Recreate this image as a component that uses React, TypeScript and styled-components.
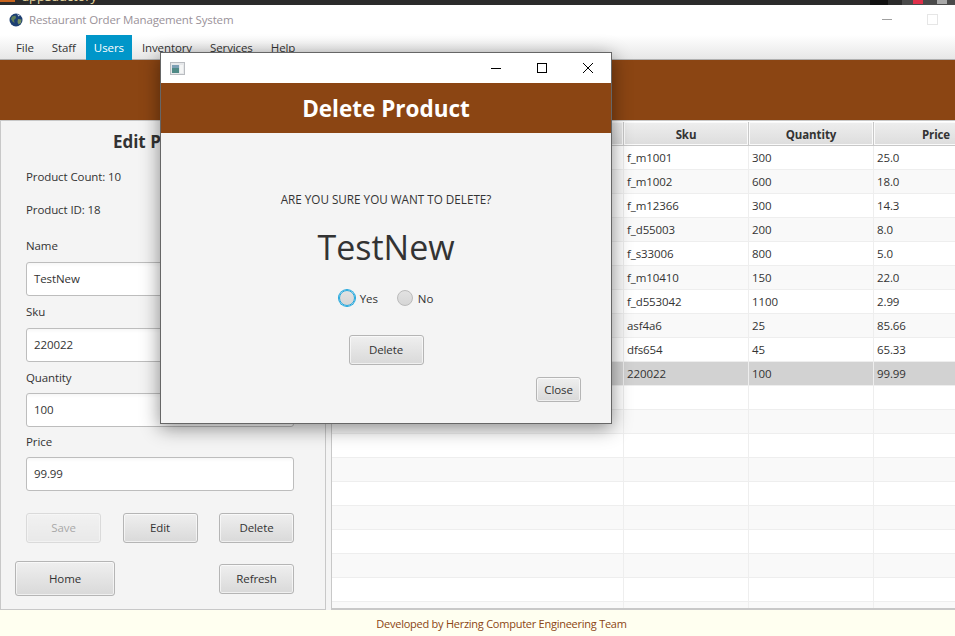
import React from 'react';
import styled, { createGlobalStyle } from 'styled-components';

const GlobalStyle = createGlobalStyle`
    html, body {
        margin: 0;
        padding: 0;
        overflow: hidden;
    }
    body {
        font-family: 'Open Sans', 'Noto Sans', sans-serif;
        font-size: 11.5px;
        letter-spacing: -0.1px;
        color: #333;
    }
`;

const MENU = ['File', 'Staff', 'Users', 'Inventory', 'Services', 'Help'];

const PRODUCTS = [
    ['f_m1001', '300', '25.0'],
    ['f_m1002', '600', '18.0'],
    ['f_m12366', '300', '14.3'],
    ['f_d55003', '200', '8.0'],
    ['f_s33006', '800', '5.0'],
    ['f_m10410', '150', '22.0'],
    ['f_d553042', '1100', '2.99'],
    ['asf4a6', '25', '85.66'],
    ['dfs654', '45', '65.33'],
    ['220022', '100', '99.99'],
];

const SELECTED_ROW = 9;
const ROW_COUNT = 20;

const Globe = () => (
    <svg width="14" height="14" viewBox="0 0 14 14">
        <circle cx="7" cy="7" r="6.5" fill="#1d3f73" />
        <path d="M3 3.5 L6.5 2.5 L7 5 L5 7 L5.5 10 L3.5 8.5 L2 6 Z" fill="#5f7f58" />
        <path d="M9 6 L12.5 6.5 L12 10 L9.5 11.5 L8.5 9 Z" fill="#77905f" />
        <path d="M8 1 L11 2.5 L9.5 3.5 Z" fill="#c9d6e4" />
    </svg>
);

const AppIcon = () => (
    <svg width="15" height="13" viewBox="0 0 15 13">
        <rect x="0.5" y="0.5" width="14" height="12" fill="#e6e8ea" stroke="#b9bcc0" />
        <rect x="2" y="3" width="7" height="8" fill="#4f8a86" />
        <rect x="2" y="3" width="7" height="3" fill="#7da0b5" />
        <rect x="10" y="3" width="3" height="8" fill="#f4f5f5" />
    </svg>
);

export default function App() {
    return (
        <Page>
            <GlobalStyle />
            <TopStrip>
                <StripAccent />
                <StripText>appSauctory</StripText>
                <StripBlock />
                <StripTray>
                    <TrayMark color="#e0304a" />
                    <TrayMark color="#a8a8a8" />
                </StripTray>
            </TopStrip>
            <TitleBar>
                <Globe />
                <WindowTitle>Restaurant Order Management System</WindowTitle>
                <WindowButtons>
                    <FadedMinimize />
                    <FadedMaximize />
                </WindowButtons>
            </TitleBar>
            <MenuBar>
                {MENU.map(item => (
                    <MenuItem key={item} $active={item === 'Users'}>
                        {item}
                    </MenuItem>
                ))}
            </MenuBar>
            <Banner />
            <Content>
                <FormPanel>
                    <PanelTitle>Edit Product</PanelTitle>
                    <InfoLine>Product Count: 10</InfoLine>
                    <InfoLine>Product ID: 18</InfoLine>
                    <Fields>
                        <FieldLabel>Name</FieldLabel>
                        <TextBox>TestNew</TextBox>
                        <FieldLabel>Sku</FieldLabel>
                        <TextBox>220022</TextBox>
                        <FieldLabel $gap={7}>Quantity</FieldLabel>
                        <TextBox $gap={7}>100</TextBox>
                        <FieldLabel $gap={7}>Price</FieldLabel>
                        <TextBox>99.99</TextBox>
                    </Fields>
                    <ActionRow>
                        <Button $disabled>Save</Button>
                        <Button>Edit</Button>
                        <Button>Delete</Button>
                    </ActionRow>
                    <BottomRow>
                        <HomeButton>Home</HomeButton>
                        <Button>Refresh</Button>
                    </BottomRow>
                </FormPanel>
                <TablePanel>
                    <HeaderRow>
                        <HeaderCell>Name</HeaderCell>
                        <HeaderCell>Sku</HeaderCell>
                        <HeaderCell>Quantity</HeaderCell>
                        <HeaderCell>Price</HeaderCell>
                    </HeaderRow>
                    {Array.from({ length: ROW_COUNT }, (_, i) => (
                        <Row key={i} $odd={i % 2 === 1} $selected={i === SELECTED_ROW}>
                            <Cell />
                            <Cell>{PRODUCTS[i]?.[0]}</Cell>
                            <Cell>{PRODUCTS[i]?.[1]}</Cell>
                            <Cell>{PRODUCTS[i]?.[2]}</Cell>
                        </Row>
                    ))}
                </TablePanel>
            </Content>
            <Footer>Developed by Herzing Computer Engineering Team</Footer>

            <Dialog>
                <DialogTitleBar>
                    <AppIcon />
                    <DialogControls>
                        <svg width="10" height="10" viewBox="0 0 10 10">
                            <path d="M0 5.5H10" stroke="#000" />
                        </svg>
                        <svg width="10" height="10" viewBox="0 0 10 10">
                            <rect x="0.5" y="0.5" width="9" height="9" fill="none" stroke="#000" />
                        </svg>
                        <svg width="10" height="10" viewBox="0 0 10 10">
                            <path d="M0 0L10 10M10 0L0 10" stroke="#000" />
                        </svg>
                    </DialogControls>
                </DialogTitleBar>
                <DialogBanner>Delete Product</DialogBanner>
                <DialogBody>
                    <Question>ARE YOU SURE YOU WANT TO DELETE?</Question>
                    <ProductName>TestNew</ProductName>
                    <RadioRow>
                        <RadioOption>
                            <Radio $focused />
                            Yes
                        </RadioOption>
                        <RadioOption>
                            <Radio />
                            No
                        </RadioOption>
                    </RadioRow>
                    <Button>Delete</Button>
                    <CloseRow>
                        <CloseButton>Close</CloseButton>
                    </CloseRow>
                </DialogBody>
            </Dialog>
        </Page>
    );
}

const Page = styled.div`
    position: relative;
    width: 955px;
    height: 636px;
    display: flex;
    flex-direction: column;
    background: #fff;
    overflow: hidden;
`;

const TopStrip = styled.div`
    height: 5px;
    flex: none;
    display: flex;
    background: #2b2b2b;
    overflow: hidden;
`;

const StripAccent = styled.div`
    width: 15px;
    height: 2px;
    background: #c8641e;
`;

const StripText = styled.div`
    margin: -11px 0 0 7px;
    color: #e8d9a0;
    font-size: 13px;
    line-height: 14px;
`;

const StripBlock = styled.div`
    width: 18px;
    height: 5px;
    margin-left: auto;
    margin-right: 14px;
    background: #111;
`;

const StripTray = styled.div`
    width: 53px;
    box-sizing: border-box;
    display: flex;
    gap: 14px;
    padding-left: 11px;
    background: #4a4a4a;
`;

const TrayMark = styled.div<{ color: string }>`
    width: 10px;
    height: 4px;
    background: ${({ color }) => color};
`;

const TitleBar = styled.div`
    height: 30px;
    flex: none;
    box-sizing: border-box;
    display: flex;
    align-items: center;
    padding: 0 0 1px 9px;
    background: #fff;
`;

const WindowTitle = styled.div`
    margin-left: 6px;
    color: #9a9299;
    letter-spacing: -0.15px;
`;

const WindowButtons = styled.div`
    margin-left: auto;
    display: flex;
    align-items: center;
    gap: 35px;
    padding-right: 17px;
`;

const FadedMinimize = styled.div`
    width: 10px;
    height: 1px;
    background: #a0a0a0;
`;

const FadedMaximize = styled.div`
    width: 9px;
    height: 9px;
    border: 1px solid #e6e6e6;
`;

const MenuBar = styled.div`
    height: 25px;
    flex: none;
    display: flex;
    gap: 2px;
    padding-left: 8px;
    background: linear-gradient(#ffffff, #e6e6e6);
    box-shadow: inset 0 -1px 0 #b0b0b0;
`;

const MenuItem = styled.div<{ $active?: boolean }>`
    display: flex;
    align-items: center;
    padding: 0 8px;
    color: ${({ $active }) => ($active ? '#fff' : '#333')};
    background: ${({ $active }) => ($active ? '#0096c9' : 'transparent')};
`;

const Banner = styled.div`
    height: 60px;
    flex: none;
    background: #8b4513;
`;

const Content = styled.div`
    flex: 1;
    min-height: 0;
    display: flex;
    gap: 5px;
    background: #f4f4f4;
`;

const FormPanel = styled.div`
    width: 326px;
    flex: none;
    box-sizing: border-box;
    padding: 0 31px 0 25px;
    border: 1px solid #c8c8c8;
    background: #f4f4f4;
    overflow: hidden;
`;

const PanelTitle = styled.div`
    margin: 9px 0 0 10px;
    text-align: center;
    font-size: 17px;
    font-weight: 700;
    letter-spacing: 0;
    line-height: 23px;
`;

const InfoLine = styled.div`
    margin-top: 15px;
    line-height: 18px;
`;

const Fields = styled.div`
    margin-top: 19px;
    display: flex;
    flex-direction: column;
`;

const FieldLabel = styled.div<{ $gap?: number }>`
    height: 16px;
    line-height: 16px;
    margin-bottom: ${({ $gap = 8 }) => $gap}px;
`;

const TextBox = styled.div<{ $gap?: number }>`
    width: 268px;
    height: 34px;
    box-sizing: border-box;
    display: flex;
    align-items: center;
    padding: 0 7px 2px;
    margin-bottom: ${({ $gap = 8 }) => $gap}px;
    border: 1px solid #bdbdbd;
    border-radius: 3px;
    background: linear-gradient(#f7f7f7, #fff 4px);
    color: #333;
`;

const ActionRow = styled.div`
    display: flex;
    justify-content: space-between;
    width: 268px;
    margin-top: 14px;
`;

const Button = styled.div<{ $disabled?: boolean }>`
    width: 75px;
    height: 30px;
    box-sizing: border-box;
    display: flex;
    align-items: center;
    justify-content: center;
    padding-bottom: 1px;
    border: 1px solid #b5b5b5;
    border-radius: 3px;
    background: linear-gradient(#efefef, #d9d9d9);
    box-shadow: inset 0 0 0 1px rgba(255, 255, 255, 0.6);
    opacity: ${({ $disabled }) => ($disabled ? 0.4 : 1)};
`;

const BottomRow = styled.div`
    display: flex;
    align-items: center;
    justify-content: space-between;
    width: 279px;
    margin: 18px 0 0 -11px;
`;

const HomeButton = styled(Button)`
    width: 100px;
    height: 35px;
`;

const TablePanel = styled.div`
    flex: 1;
    min-width: 0;
    border: 1px solid #c8c8c8;
    border-width: 1px 0 2px 1px;
    padding-top: 1px;
    background: #fff;
    overflow: hidden;
`;

const COLUMNS = '292px 125px 125px 125px';

const HeaderRow = styled.div`
    display: grid;
    grid-template-columns: ${COLUMNS};
    height: 24px;
    box-sizing: border-box;
    border-bottom: 1px solid #c8c8c8;
`;

const HeaderCell = styled.div`
    display: flex;
    align-items: center;
    justify-content: center;
    padding-top: 2px;
    border-right: 1px solid #c8c8c8;
    box-shadow: inset 0 0 0 1px #fafafa;
    background: linear-gradient(#eeeeee, #dddddd);
    font-weight: 700;
`;

const Row = styled.div<{ $odd: boolean; $selected: boolean }>`
    display: grid;
    grid-template-columns: ${COLUMNS};
    height: 24px;
    box-sizing: border-box;
    border-bottom: 1px solid #eeeeee;
    background: ${({ $odd, $selected }) => ($selected ? '#d2d2d2' : $odd ? '#f9f9f9' : '#ffffff')};
`;

const Cell = styled.div`
    display: flex;
    align-items: center;
    padding-left: 3px;
    border-right: 1px solid #eeeeee;
`;

const Footer = styled.div`
    height: 26px;
    flex: none;
    box-sizing: border-box;
    display: flex;
    align-items: center;
    justify-content: center;
    padding-left: 48px;
    background: #fffff0;
    color: #8b4513;
    font-size: 11px;
    letter-spacing: -0.25px;
`;

const Dialog = styled.div`
    position: absolute;
    left: 160px;
    top: 52px;
    width: 452px;
    height: 372px;
    box-sizing: border-box;
    display: flex;
    flex-direction: column;
    border: 1px solid #666;
    background: #f4f4f4;
    box-shadow: 0 4px 18px rgba(0, 0, 0, 0.45);
`;

const DialogTitleBar = styled.div`
    height: 30px;
    flex: none;
    display: flex;
    align-items: center;
    padding-left: 9px;
    background: #fff;
`;

const DialogControls = styled.div`
    margin-left: auto;
    display: flex;
    gap: 36px;
    padding-right: 18px;
`;

const DialogBanner = styled.div`
    height: 50px;
    flex: none;
    display: flex;
    align-items: center;
    justify-content: center;
    background: #8b4513;
    color: #fff;
    font-size: 22.5px;
    font-weight: 700;
    letter-spacing: 0;
`;

const DialogBody = styled.div`
    flex: 1;
    display: flex;
    flex-direction: column;
    align-items: center;
`;

const Question = styled.div`
    margin-top: 57px;
    font-size: 11.7px;
    letter-spacing: 0;
    line-height: 18px;
`;

const ProductName = styled.div`
    margin-top: 16px;
    font-size: 34px;
    letter-spacing: 0;
    line-height: 46px;
`;

const RadioRow = styled.div`
    margin-top: 18px;
    display: flex;
    gap: 19px;
    margin-bottom: 27px;
`;

const RadioOption = styled.div`
    display: flex;
    align-items: center;
    gap: 5px;
    height: 20px;
`;

const Radio = styled.span<{ $focused?: boolean }>`
    width: 16px;
    height: 16px;
    box-sizing: border-box;
    border-radius: 50%;
    border: 1px solid ${({ $focused }) => ($focused ? '#22a7dd' : '#bbbbbb')};
    background: linear-gradient(#e2e2e2, #d6d6d6);
    box-shadow: ${({ $focused }) => ($focused ? '0 0 0 1px #22a7dd' : 'none')};
`;

const CloseRow = styled.div`
    align-self: stretch;
    display: flex;
    justify-content: flex-end;
    margin-top: 12px;
    padding-right: 30px;
`;

const CloseButton = styled(Button)`
    width: 45px;
    height: 25px;
`;
